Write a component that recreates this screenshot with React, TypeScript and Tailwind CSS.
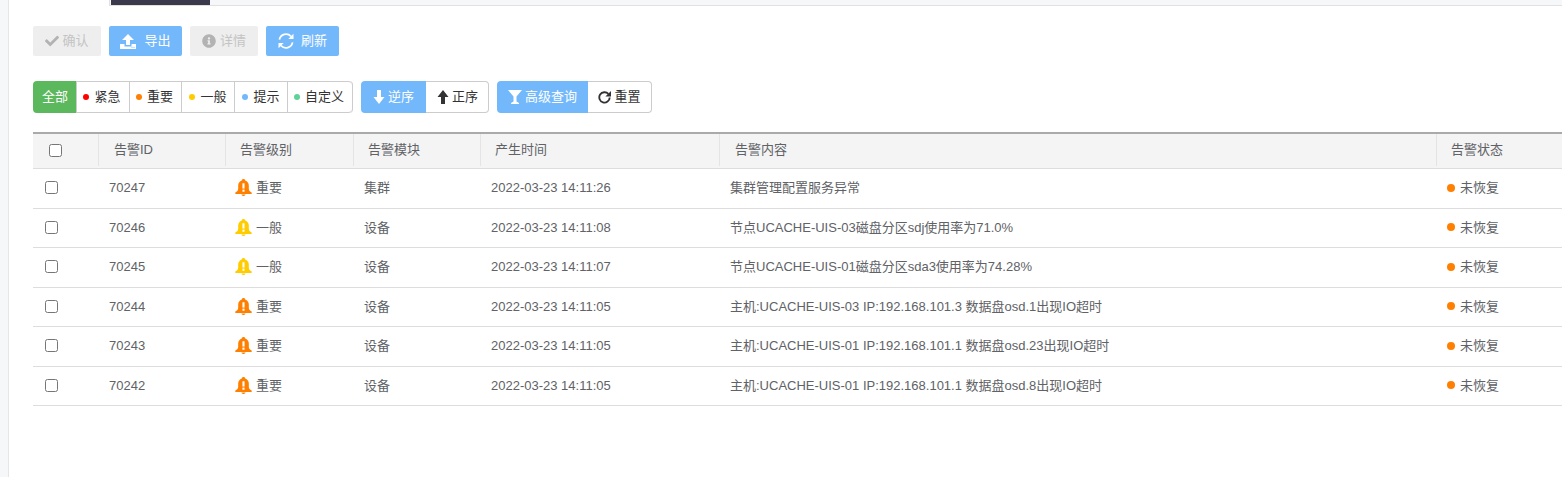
import React from 'react';
import { FaCheck, FaInfoCircle } from 'react-icons/fa';

interface AlarmRow {
  id: string;
  level: 'major' | 'normal';
  module: string;
  time: string;
  content: string;
}

const rows: AlarmRow[] = [
  { id: '70247', level: 'major', module: '集群', time: '2022-03-23 14:11:26', content: '集群管理配置服务异常' },
  { id: '70246', level: 'normal', module: '设备', time: '2022-03-23 14:11:08', content: '节点UCACHE-UIS-03磁盘分区sdj使用率为71.0%' },
  { id: '70245', level: 'normal', module: '设备', time: '2022-03-23 14:11:07', content: '节点UCACHE-UIS-01磁盘分区sda3使用率为74.28%' },
  { id: '70244', level: 'major', module: '设备', time: '2022-03-23 14:11:05', content: '主机:UCACHE-UIS-03 IP:192.168.101.3 数据盘osd.1出现IO超时' },
  { id: '70243', level: 'major', module: '设备', time: '2022-03-23 14:11:05', content: '主机:UCACHE-UIS-01 IP:192.168.101.1 数据盘osd.23出现IO超时' },
  { id: '70242', level: 'major', module: '设备', time: '2022-03-23 14:11:05', content: '主机:UCACHE-UIS-01 IP:192.168.101.1 数据盘osd.8出现IO超时' },
];

const levels = [
  { label: '紧急', dot: 'bg-[#ff0000]', w: 'w-[53px] pr-[2px]' },
  { label: '重要', dot: 'bg-[#ff8000]', w: 'w-[52px] pr-[2px]' },
  { label: '一般', dot: 'bg-[#ffcc00]', w: 'w-[53px]' },
  { label: '提示', dot: 'bg-[#73b8fb]', w: 'w-[53px]' },
  { label: '自定义', dot: 'bg-[#5fd29a]', w: 'w-[64px] pr-[2px]' },
];

const BellIcon = ({ className }: { className: string }) => (
  <svg viewBox="0 0 16 16" className={className} fill="currentColor">
    <path d="M8 0c-.9 0-1.5.6-1.600 1.300C4.300 2 3 3.800 3 6v3.200C3 10.800 2 11.800.3 12.800v1.200h15.400v-1.200C14 11.800 13 10.800 13 9.200V6c0-2.200-1.300-4-3.400-4.700C9.500.6 8.900 0 8 0zM6.100 14.600C6.300 15.500 7.100 16 8 16s1.700-.5 1.900-1.400H6.100z" />
    <rect x="7" y="4" width="2" height="5" fill="#fff" />
    <rect x="7" y="10" width="2" height="2" fill="#fff" />
  </svg>
);

const UploadIcon = () => (
  <svg viewBox="0 0 16 15" className="w-[16px] h-[15px]" fill="currentColor">
    <path d="M8 0l6 6H10v5H6V6H2L8 0z" />
    <path d="M0 10h4.500v2.500h7V10H16v5H0v-5z" />
    <rect x="11.500" y="12.800" width="1" height="1" fill="#73b8fb" />
    <rect x="13.500" y="12.800" width="1" height="1" fill="#73b8fb" />
  </svg>
);

const RefreshIcon = () => (
  <svg viewBox="0 0 16 16" className="w-[16px] h-[16px]" fill="none" stroke="currentColor" strokeWidth="1.700">
    <path d="M1.400 6.600A6.800 6.800 0 0 1 13 3.300" />
    <path d="M14.600 9.400A6.800 6.800 0 0 1 3 12.700" />
    <path d="M15.500 0.800V6h-5.200z" fill="currentColor" stroke="none" />
    <path d="M0.500 15.200V10h5.200z" fill="currentColor" stroke="none" />
  </svg>
);

const ArrowDownIcon = () => (
  <svg viewBox="0 0 12 14" className="w-[12px] h-[14px]" fill="currentColor">
    <path d="M4 0h4v7h3.500L6 14 .5 7H4z" />
  </svg>
);

const ArrowUpIcon = () => (
  <svg viewBox="0 0 12 14" className="w-[12px] h-[14px]" fill="currentColor">
    <path d="M4 14h4V7h3.500L6 0 .5 7H4z" />
  </svg>
);

const FilterIcon = () => (
  <svg viewBox="0 0 14 14" className="w-[14px] h-[14px]" fill="currentColor">
    <path d="M0 0h14L8.500 6.500V11.500L11 13v1H3v-1l2.500-1.500V6.500z" />
  </svg>
);

const ResetIcon = () => (
  <svg viewBox="0 0 14 14" className="w-[13px] h-[13px]" fill="none" stroke="currentColor" strokeWidth="2">
    <path d="M11.200 3.200A5.600 5.600 0 1 0 12.600 7" />
    <path d="M14 0v6H8z" fill="currentColor" stroke="none" />
  </svg>
);

const Checkbox = () => (
  <span className="block w-[13px] h-[13px] bg-white border border-[#767676] rounded-[2.5px]" />
);

const App = () => {
  return (
    <div className="w-[1562px] h-[477px] overflow-hidden bg-white flex font-['Arial','Liberation_Sans','Noto_Sans_CJK_SC',sans-serif] text-[13px] text-[#606266]">
      {/* left rail */}
      <div className="w-[9px] shrink-0 bg-[#f6f7f9] border-r border-[#e6e6e6]" />

      <div className="flex-1 min-w-0 flex flex-col">
        {/* tabs strip */}
        <div className="h-[6px] ml-[100px] pl-[1px] flex bg-[#f6f7f9] border-l border-b border-[#e0e0e0]">
          <div className="w-[99px] h-[5px] bg-[#3a3a4c]" />
        </div>

        <div className="pl-[24px]">
          {/* action buttons */}
          <div className="flex gap-[8px] mt-[20px]">
            <button className="w-[68px] h-[30px] flex items-center justify-center gap-[3px] rounded-[2px] bg-[#eeeeee] text-[#c4c4c4]">
              <FaCheck className="w-[14px] h-[14px] text-[#b3b3b3]" />
              确认
            </button>
            <button className="w-[73px] h-[30px] flex items-center justify-center gap-[8px] rounded-[2px] bg-[#73b8fb] text-white">
              <UploadIcon />
              导出
            </button>
            <button className="w-[68px] h-[30px] flex items-center justify-center gap-[4px] rounded-[2px] bg-[#eeeeee] text-[#c4c4c4]">
              <FaInfoCircle className="w-[14px] h-[14px] text-[#b3b3b3]" />
              详情
            </button>
            <button className="w-[73px] h-[30px] flex items-center justify-center gap-[7px] rounded-[2px] bg-[#73b8fb] text-white">
              <RefreshIcon />
              刷新
            </button>
          </div>

          {/* filters */}
          <div className="flex gap-[8px] mt-[25px] text-[#333333]">
            <div className="flex h-[32px] rounded-[4px] border-r border-[#cccccc]">
              <button className="w-[44px] h-[32px] pl-px rounded-l-[4px] bg-[#5cb85c] text-white border-r border-[#cccccc]">全部</button>
              <div className="flex h-[32px] border-y border-[#cccccc] rounded-r-[4px]">
                {levels.map((l, i) => (
                  <button
                    key={l.label}
                    className={`${l.w} flex items-center justify-center gap-[5px] ${i < levels.length - 1 ? 'border-r border-[#cccccc]' : ''}`}
                  >
                    <span className={`w-[6px] h-[6px] rounded-full ${l.dot}`} />
                    {l.label}
                  </button>
                ))}
              </div>
            </div>

            <div className="flex h-[32px]">
              <button className="w-[65px] flex items-center justify-center gap-[3px] rounded-l-[4px] bg-[#73b8fb] text-white">
                <ArrowDownIcon />
                逆序
              </button>
              <button className="w-[63px] pl-px flex items-center justify-center gap-[3px] rounded-r-[4px] border border-l-0 border-[#cccccc]">
                <ArrowUpIcon />
                正序
              </button>
            </div>

            <div className="flex h-[32px]">
              <button className="w-[91px] flex items-center justify-center gap-[3px] rounded-l-[4px] bg-[#73b8fb] text-white">
                <FilterIcon />
                高级查询
              </button>
              <button className="w-[64px] flex items-center justify-center gap-[3px] rounded-r-[4px] border border-l-0 border-[#cccccc]">
                <ResetIcon />
                重置
              </button>
            </div>
          </div>

          {/* alarm table */}
          <div className="mt-[19px] w-[1560px]">
            <div className="flex h-[37px] items-center pb-[2px] bg-[#f4f4f4] border-t-2 border-[#aaaaaa] border-b border-b-[#dddddd]">
              <div className="w-[66px] h-full flex items-center pl-[16px] border-r border-[#e4e4e4]"><Checkbox /></div>
              <div className="w-[127px] h-full flex items-center pl-[15px] border-r border-[#e4e4e4]">告警ID</div>
              <div className="w-[128px] h-full flex items-center pl-[14px] border-r border-[#e4e4e4]">告警级别</div>
              <div className="w-[127px] h-full flex items-center pl-[14px] border-r border-[#e4e4e4]">告警模块</div>
              <div className="w-[239px] h-full flex items-center pl-[14px] border-r border-[#e4e4e4]">产生时间</div>
              <div className="w-[717px] h-full flex items-center pl-[15px] border-r border-[#e4e4e4]">告警内容</div>
              <div className="flex-1 h-full flex items-center pl-[14px]">告警状态</div>
            </div>
            {rows.map((r) => (
              <div key={r.id} className="flex h-[39.5px] items-center pb-px border-b border-[#dddddd]">
                <div className="w-[65px] pl-[12px]"><Checkbox /></div>
                <div className="w-[127px] pl-[11px]">{r.id}</div>
                <div className="w-[128px] pl-[10px] flex items-center gap-[3px]">
                  <BellIcon className={`w-[17px] h-[17px] ${r.level === 'major' ? 'text-[#ff8000]' : 'text-[#ffcc00]'}`} />
                  <span className="ml-px">{r.level === 'major' ? '重要' : '一般'}</span>
                </div>
                <div className="w-[127px] pl-[11px]">{r.module}</div>
                <div className="w-[239px] pl-[11px]">{r.time}</div>
                <div className="w-[717px] pl-[11px]">{r.content}</div>
                <div className="flex-1 pl-[11px] flex items-center gap-[5px]">
                  <span className="w-[8px] h-[8px] rounded-full bg-[#ff8000]" />
                  未恢复
                </div>
              </div>
            ))}
          </div>
        </div>
      </div>
    </div>
  );
};

export default App;
